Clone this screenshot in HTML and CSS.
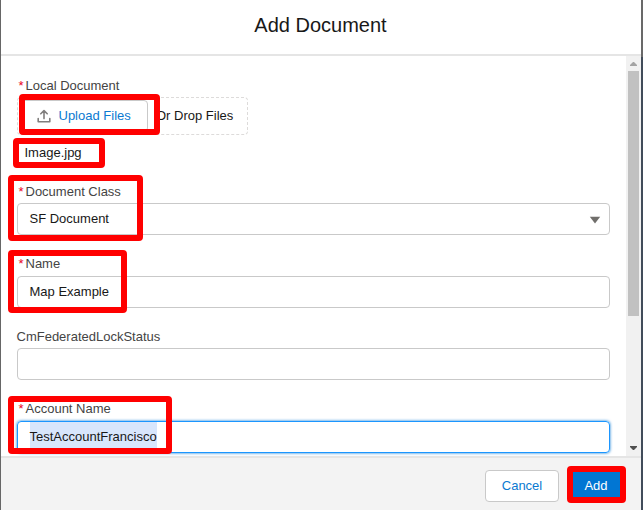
FILE: index.html
```html
<!DOCTYPE html>
<html lang="en">
<head>
<meta charset="utf-8">
<title>Add Document</title>
<link rel="stylesheet" href="styles.css">
</head>
<body>
<div class="backdrop">
  <section class="modal">
    <header class="modal-header"><h1>Add Document</h1></header>
    <div class="modal-body">
      <form class="form">
        <div class="upload">
          <div class="label"><span class="req">*</span>Local Document</div>
          <div class="dropzone">
            <div class="upload-button">
              <svg class="upload-icon" viewBox="0 0 14 14" width="14" height="14"><path d="M1.2 9.5v3.2h11.6V9.5M7 9.6V2M3.8 4.8 7 1.6l3.2 3.2" fill="none" stroke="#807e7d" stroke-width="1.6" stroke-linecap="round" stroke-linejoin="round"/></svg>
              <span>Upload Files</span>
            </div>
            <span class="drop-text">Or Drop Files</span>
          </div>
          <div class="file-name">Image.jpg</div>
          <i class="mark mark-upload"></i>
          <i class="mark mark-file"></i>
        </div>
        <div class="field">
          <div class="label"><span class="req">*</span>Document Class</div>
          <div class="input select"><span>SF Document</span><svg width="12" height="8" viewBox="0 0 12 8"><path d="M.8.8h10.4L6 7.4z" fill="#706e6b"/></svg></div>
          <i class="mark mark-class"></i>
        </div>
        <div class="field">
          <div class="label"><span class="req">*</span>Name</div>
          <div class="input">Map Example</div>
          <i class="mark mark-name"></i>
        </div>
        <div class="field">
          <div class="label label-plain">CmFederatedLockStatus</div>
          <div class="input"></div>
        </div>
        <div class="field">
          <div class="label"><span class="req">*</span>Account Name</div>
          <div class="input focused"><span class="selected">TestAccountFrancisco</span></div>
          <i class="mark mark-account"></i>
        </div>
      </form>
      <div class="scrollbar">
        <svg width="7" height="4" viewBox="0 0 7 4"><path d="M0 4V3L3 0h1l3 3v1z" fill="#a3a3a3"/></svg>
        <div class="thumb"></div>
        <svg class="arrow-down" width="7" height="4" viewBox="0 0 7 4"><path d="M0 0v1l3 3h1l3-3V0z" fill="#505050"/></svg>
      </div>
    </div>
    <footer class="modal-footer">
      <div class="button">Cancel</div>
      <div class="button primary">Add<i class="mark mark-add"></i></div>
    </footer>
  </section>
</div>
</body>
</html>
```
FILE: styles.css
```css
* { box-sizing: border-box; }
body {
  margin: 0;
  font: 13px/20px "Liberation Sans", Arial, sans-serif;
  color: #181818;
  overflow: hidden;
}
.backdrop {
  width: 643px;
  height: 510px;
  padding: 0 2px 0 1px;
  background: linear-gradient(90deg, #666 50%, transparent 50%), linear-gradient(#696969 57px, #414c5a 57px);
}
.modal {
  height: 510px;
  display: flex;
  flex-direction: column;
  background: #fff;
}
.modal-header {
  height: 56px;
  flex: none;
  border-bottom: 2px solid #e5e5e5;
  padding: 13px 1px 0 0;
  text-align: center;
}
h1 { margin: 0; font-size: 20px; line-height: 25px; font-weight: 400; }
.modal-body { height: 400px; flex: none; display: flex; overflow: hidden; }
.form { flex: 1; padding: 20px 16px 0; margin: 0; }
.upload { position: relative; height: 105.6px; }
.label { height: 20px; color: #444; padding-left: 1.5px; white-space: nowrap; }
.label-plain { padding-left: 0; margin-left: -0.5px; }
.req { color: #ea001e; display: inline-block; width: 7px; }
.dropzone {
  width: 231px;
  height: 38px;
  margin-top: 1px;
  padding: 2px;
  border: 1px dashed #dddbda;
  border-radius: 4px;
  display: flex;
  align-items: center;
}
.upload-button {
  width: 128px;
  height: 32px;
  border: 1px solid #c9c9c9;
  border-radius: 4px;
  display: flex;
  align-items: center;
  padding-left: 16px;
  gap: 7.5px;
  color: #0b7ad1;
}
.drop-text { margin-left: 8px; white-space: nowrap; }
.file-name { margin: 8px 0 0 7.5px; }
.field { position: relative; height: 72.6px; }
.input {
  height: 32px;
  margin-top: 1.6px;
  padding: 5px 12px 0 11.5px;
  border: 1px solid #c9c9c9;
  border-radius: 4px;
}
.select { display: flex; justify-content: space-between; padding-right: 8px; }
.select svg { margin-top: 7px; }
.focused { padding-top: 0; border-color: #1b96ff; box-shadow: 0 0 3px #0176d3; }
.selected { display: inline-block; line-height: 30px; background: #d8e6fc; }
.scrollbar {
  width: 15px;
  padding: 6px 4px 6px 2px;
  background: #f1f1f1;
  display: flex;
  flex-direction: column;
  align-items: flex-start;
}
.scrollbar svg { margin-left: 2px; }
.thumb { width: 11px; height: 245px; margin-top: 5px; background: #c1c1c1; flex: none; }
.scrollbar .arrow-down { margin-top: auto; }
.modal-footer {
  flex: 1;
  display: flex;
  justify-content: flex-end;
  gap: 12px;
  padding: 12px 20px 0 0;
  border-top: 2px solid #e5e5e5;
  background: #f3f3f3;
}
.button {
  position: relative;
  width: 74px;
  height: 32px;
  border: 1px solid #c9c9c9;
  border-radius: 4px;
  background: #fff;
  color: #0b7ad1;
  line-height: 30px;
  text-align: center;
}
.primary { width: 50px; border-color: #0176d3; background: #0176d3; color: #fff; }
.mark { position: absolute; border: 6px solid #f00; border-radius: 4px; }
.mark-upload { left: 2px; top: 18px; width: 141px; height: 41px; }
.mark-file { left: -4px; top: 62px; width: 92px; height: 30px; }
.mark-class { left: -9px; top: -6.6px; width: 135px; height: 66px; }
.mark-name { left: -9px; top: -4.2px; width: 119px; height: 63px; }
.mark-account { left: -9px; top: -3.4px; width: 164px; height: 58px; }
.mark-add { left: -5px; top: -5px; width: 59px; height: 37px; }
```
